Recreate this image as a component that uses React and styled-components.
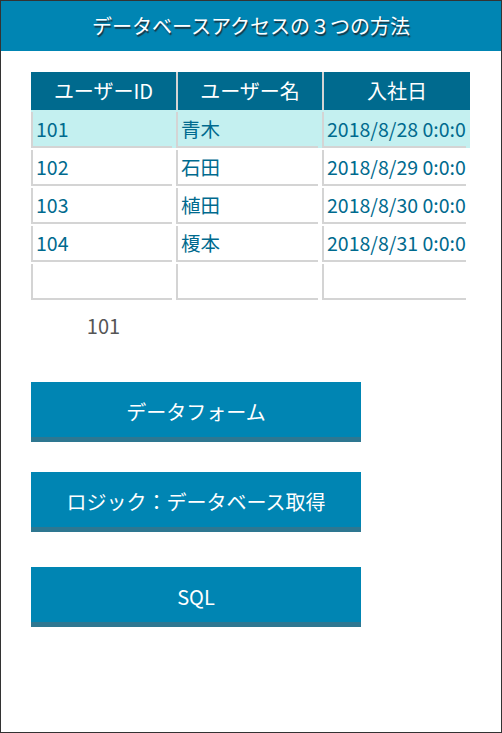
import React from 'react';
import styled, { createGlobalStyle } from 'styled-components';

const GlobalStyle = createGlobalStyle`
  html, body {
    margin: 0;
    padding: 0;
    background: #fff;
  }
  * {
    box-sizing: border-box;
  }
`;

const Frame = styled.div`
  width: 502px;
  height: 733px;
  border: 1px solid #333;
  background: #fff;
  font-family: 'Noto Sans CJK JP', 'Noto Sans', sans-serif;
  overflow: hidden;
`;

const TitleBar = styled.header`
  height: 50px;
  background: #0085b3;
  color: #fff;
  display: flex;
  align-items: center;
  justify-content: center;
  font-size: 20px;
  text-shadow: 1px 2px 1px #1a3440;
  padding-bottom: 2px;
`;

const Body = styled.div`
  padding: 21px 0 0 30px;
`;

const Grid = styled.div`
  width: 439px;
`;

const cols = '145px 146px 148px';

const HeadRow = styled.div`
  display: grid;
  grid-template-columns: ${cols};
  height: 38px;
  background: #006a8e;
`;

const HeadCell = styled.div`
  display: flex;
  align-items: center;
  justify-content: center;
  color: #fff;
  font-size: 20px;
  border-left: ${({ first }) => (first ? 'none' : '2px solid #d4d4d4')};
  padding-bottom: 2px;
`;

const DataRow = styled.div`
  display: grid;
  grid-template-columns: ${cols};
  height: 38px;
  background: ${({ selected }) => (selected ? '#c4f0f0' : '#fff')};
`;

const Cell = styled.div`
  margin: 2px 4px 0 0;
  border-left: 2px solid #d4d4d4;
  border-bottom: 2px solid #d4d4d4;
  color: #006a8e;
  font-size: 19.5px;
  display: flex;
  align-items: center;
  padding: 0 0 2px 3px;
  white-space: nowrap;
  overflow: hidden;
`;

const Label = styled.div`
  width: 145px;
  margin-top: 12px;
  text-align: center;
  color: #555;
  font-size: 20px;
  line-height: 28px;
`;

const Button = styled.button`
  display: flex;
  align-items: center;
  justify-content: center;
  width: 330px;
  height: 60px;
  margin-top: ${({ gap }) => gap}px;
  padding: 4px 0 0;
  border: none;
  border-bottom: 5px solid #2e7791;
  background: #0085b3;
  color: #fff;
  font-family: inherit;
  font-size: 20px;
  cursor: pointer;
`;

const rows = [
  ['101', '青木', '2018/8/28 0:0:0'],
  ['102', '石田', '2018/8/29 0:0:0'],
  ['103', '植田', '2018/8/30 0:0:0'],
  ['104', '榎本', '2018/8/31 0:0:0'],
  ['', '', ''],
];

export default function App() {
  return (
    <>
      <GlobalStyle />
      <Frame>
        <TitleBar>データベースアクセスの３つの方法</TitleBar>
        <Body>
          <Grid>
            <HeadRow>
              <HeadCell first>ユーザーID</HeadCell>
              <HeadCell>ユーザー名</HeadCell>
              <HeadCell>入社日</HeadCell>
            </HeadRow>
            {rows.map((r, i) => (
              <DataRow key={i} selected={i === 0}>
                {r.map((v, j) => (
                  <Cell key={j}>{v}</Cell>
                ))}
              </DataRow>
            ))}
          </Grid>
          <Label>101</Label>
          <Button gap={42}>データフォーム</Button>
          <Button gap={30}>ロジック：データベース取得</Button>
          <Button gap={35}>SQL</Button>
        </Body>
      </Frame>
    </>
  );
}
